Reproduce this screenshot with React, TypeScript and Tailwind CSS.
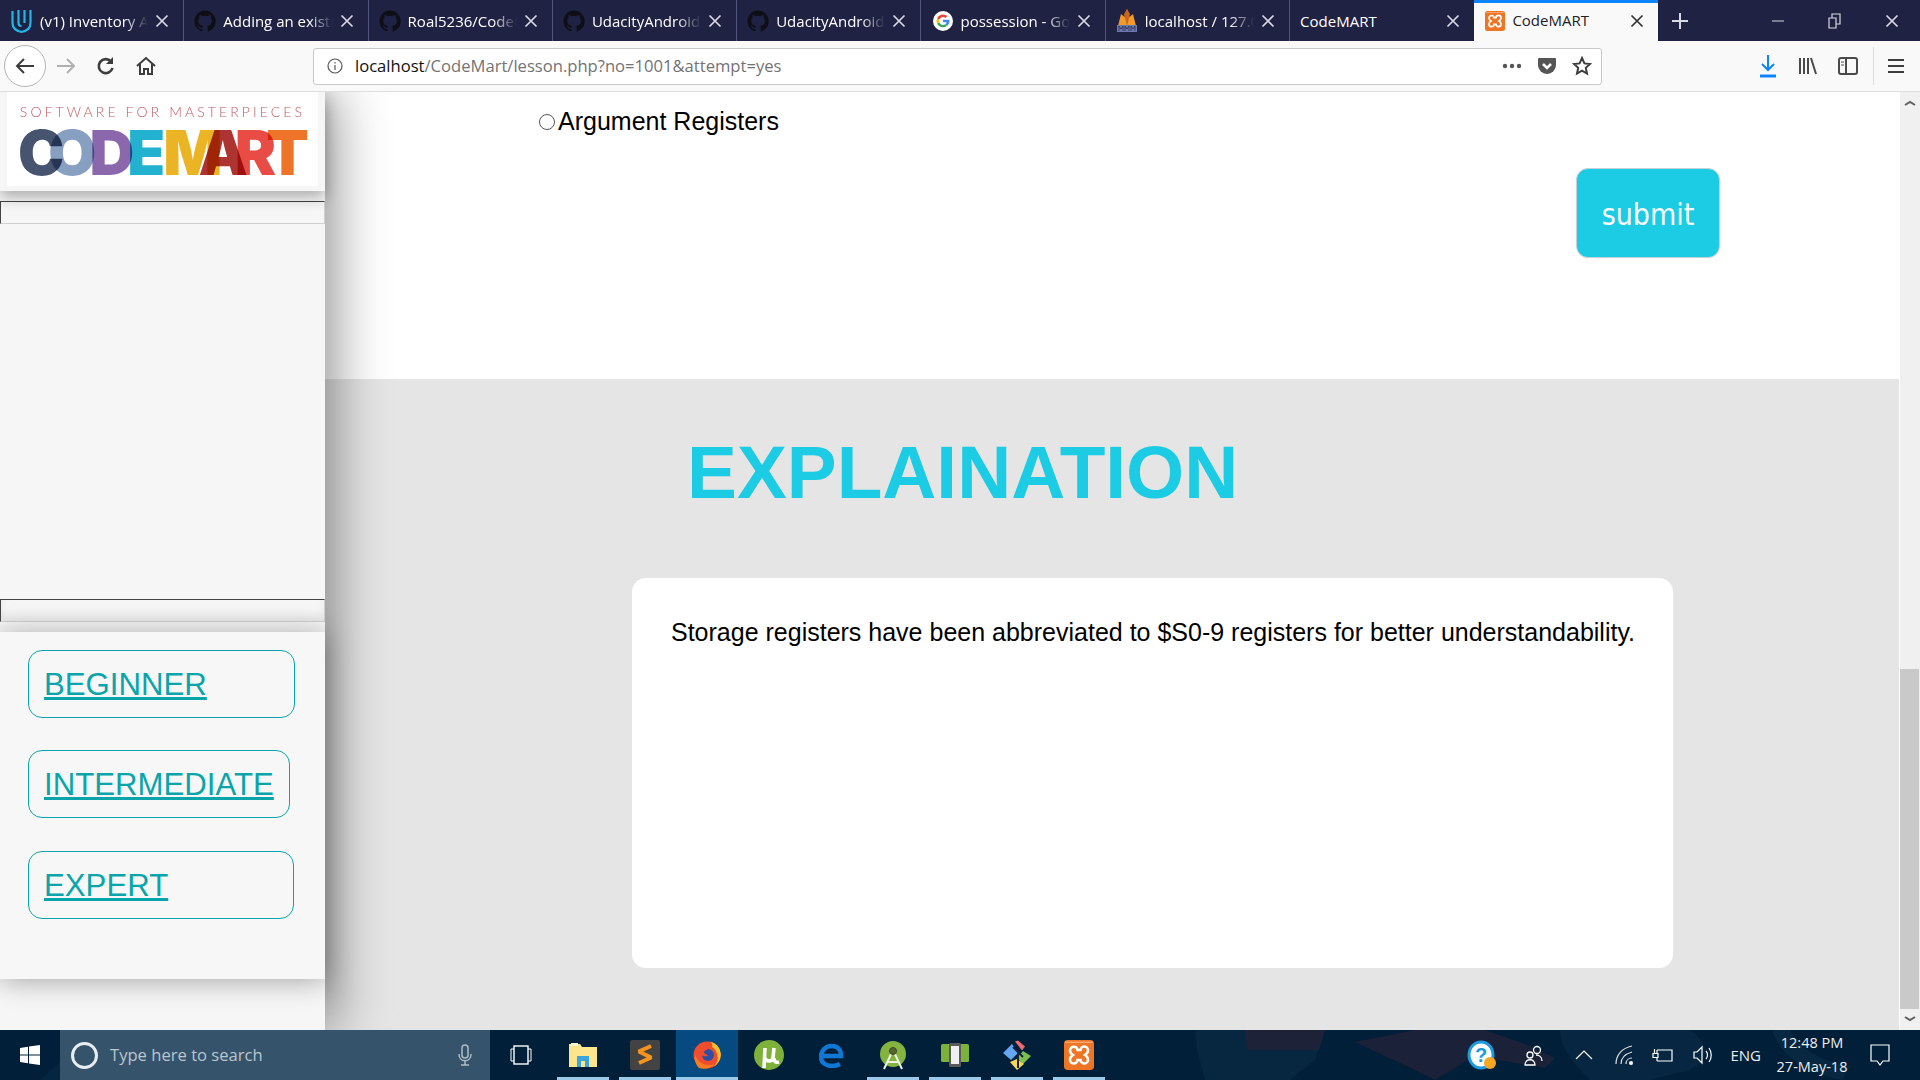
const Close = ({ dark }: { dark?: boolean }) => (
  <svg width="14" height="14" viewBox="0 0 14 14" className="shrink-0" fill="none" stroke={dark ? "#333" : "#d8d9e2"} strokeWidth="1.7">
    <path d="M1.5 1.5l11 11M12.5 1.5l-11 11" />
  </svg>
);

const GitHub = () => (
  <svg width="22" height="22" viewBox="0 0 24 24" className="shrink-0" fill="#0e0f16">
    <path d="M12 .5C5.6.5.5 5.7.5 12.2c0 5.1 3.3 9.5 7.9 11 .6.1.8-.3.8-.6v-2c-3.200.7-3.900-1.400-3.900-1.400-.5-1.300-1.300-1.700-1.300-1.700-1-.7.1-.7.1-.7 1.200.1 1.800 1.200 1.800 1.200 1 1.800 2.700 1.300 3.400 1 .1-.8.4-1.300.7-1.600-2.600-.3-5.300-1.300-5.300-5.700 0-1.300.4-2.300 1.200-3.100-.1-.3-.5-1.500.1-3.100 0 0 1-.3 3.200 1.200a11 11 0 0 1 5.800 0c2.200-1.500 3.200-1.200 3.200-1.200.6 1.600.2 2.800.1 3.100.7.8 1.200 1.800 1.200 3.100 0 4.500-2.700 5.400-5.300 5.700.4.400.8 1.100.8 2.200v3.200c0 .3.2.7.8.6 4.600-1.500 7.900-5.900 7.900-11C23.500 5.700 18.400.5 12 .5z" />
  </svg>
);

const Udacity = () => (
  <svg width="23" height="26" viewBox="0 0 22 26" className="shrink-0" fill="none" stroke="#1fb6e8" strokeWidth="2.2">
    <path d="M2 3v12c0 5 4 8 9 9 5-1 9-4 9-9V2M8 2v13c0 2 1 3 3 3M14 2v13" />
  </svg>
);

const Google = () => (
  <svg width="20" height="20" viewBox="0 0 20 20" className="ml-[2px] shrink-0">
    <circle cx="10" cy="10" r="10" fill="#fff" />
    <path d="M10 3.500a6.500 6.500 0 0 1 4.300 1.600l-1.800 1.800A4 4 0 0 0 6.200 8.700L4.200 7A6.500 6.500 0 0 1 10 3.500z" fill="#ea4335" />
    <path d="M4.200 7l2 1.700a4 4 0 0 0 0 2.600l-2 1.700a6.500 6.500 0 0 1 0-6z" fill="#fbbc05" />
    <path d="M4.200 13l2-1.700a4 4 0 0 0 6 2l1.900 1.500A6.500 6.500 0 0 1 4.200 13z" fill="#34a853" />
    <path d="M16.400 8.800H10v2.500h3.600a3 3 0 0 1-1.300 2l1.900 1.500a6.500 6.500 0 0 0 2.200-6z" fill="#4285f4" />
  </svg>
);

const Pma = () => (
  <svg width="22" height="24" viewBox="0 0 22 24" className="shrink-0">
    <path d="M11 0l2.500 8L17 5l3 12H2L5 5l3.500 3z" fill="#f09a2c" />
    <path d="M8 5l3-5 3 5-3 12z" fill="#c9651c" />
    <rect x="1" y="16" width="20" height="7" fill="#6c78af" />
    <path d="M3 22v-5l2 3 2-3v5M9 22v-5l2 3 2-3v5M15 22v-5l2 3 2-3v5" fill="none" stroke="#2a2f52" strokeWidth=".8" />
  </svg>
);

const Xampp = ({ size = 20 }: { size?: number }) => (
  <svg width={size} height={size} viewBox="0 0 20 20" className="shrink-0">
    <rect width="20" height="20" rx="2.500" fill="#ee7524" />
    <path d="M.8 1.500h18.400" stroke="#f8b183" strokeWidth=".8" />
    <path d="M6.500 4.500a2.500 2.500 0 0 0-2.500 2.500c0 1.300.8 2.200 2 3-1.200.8-2 1.700-2 3a2.500 2.500 0 0 0 5 .3h2a2.500 2.500 0 0 0 5-.3c0-1.300-.8-2.200-2-3 1.200-.8 2-1.700 2-3a2.500 2.500 0 0 0-5-.3H9A2.500 2.500 0 0 0 6.500 4.500z" fill="none" stroke="#fff" strokeWidth="1.700" />
  </svg>
);

function Tab({ icon, label, fade = true, last }: { icon?: React.ReactNode; label: string; fade?: boolean; last?: boolean }) {
  return (
    <div className={`flex h-full w-[184.300px] shrink-0 items-center gap-[7px] pl-[10px] pr-[14px] ${last ? "" : "border-r border-[#50547a]"}`}>
      {icon}
      <span className={`flex-1 overflow-hidden whitespace-nowrap pt-[1px] text-[15px] text-white ${fade ? "[mask-image:linear-gradient(to_right,#000_78%,transparent)]" : ""}`}>
        {label}
      </span>
      <Close />
    </div>
  );
}

function TabBar() {
  return (
    <div className="flex h-[41px] shrink-0 items-center bg-[#1f2243]">
      <Tab icon={<Udacity />} label="(v1) Inventory App" />
      <Tab icon={<GitHub />} label="Adding an existing" />
      <Tab icon={<GitHub />} label="Roal5236/CodeMart" />
      <Tab icon={<GitHub />} label="UdacityAndroid/And" />
      <Tab icon={<GitHub />} label="UdacityAndroid/And" />
      <Tab icon={<Google />} label="possession - Google" />
      <Tab icon={<Pma />} label="localhost / 127.0.0.1" />
      <Tab label="CodeMART" fade={false} last />
      <div className="flex h-full w-[184px] shrink-0 items-center gap-[7px] border-t-[3px] border-[#0a84ff] bg-[#f9f9fa] pl-[11px] pr-[14px] pb-[3px]">
        <Xampp />
        <span className="flex-1 text-[15px] text-[#222]">CodeMART</span>
        <Close dark />
      </div>
      <div className="flex w-[38px] justify-center pl-[5px]">
        <svg width="18" height="18" viewBox="0 0 18 18" stroke="#d8d9e2" strokeWidth="2"><path d="M9 1v16M1 9h16" /></svg>
      </div>
      <div className="ml-auto flex h-full items-center">
        <div className="flex w-[57px] justify-center">
          <svg width="12" height="12" viewBox="0 0 12 12" stroke="#d8d9e2"><path d="M0 6h12" /></svg>
        </div>
        <div className="flex w-[57px] justify-center">
          <svg width="13" height="16" viewBox="0 0 13 16" fill="none" stroke="#d8d9e2" strokeWidth="1.200"><path d="M1 5h7v10H1zM4 5V1h8v10H8" /></svg>
        </div>
        <div className="flex w-[57px] justify-center">
          <Close />
        </div>
      </div>
    </div>
  );
}

function Toolbar() {
  return (
    <div className="flex h-[51px] shrink-0 items-center border-b border-[#dedede] bg-[#f9f9fa]">
      <div className="ml-[4px] flex h-[42px] w-[42px] items-center justify-center rounded-full border border-[#b5b5b5] bg-white">
        <svg width="20" height="20" viewBox="0 0 20 20" fill="none" stroke="#3d3d3d" strokeWidth="2"><path d="M19 10H2M9 3l-7 7 7 7" /></svg>
      </div>
      <div className="ml-[10px] w-[20px]">
        <svg width="20" height="20" viewBox="0 0 20 20" fill="none" stroke="#b0b0b0" strokeWidth="2"><path d="M1 10h17M11 3l7 7-7 7" /></svg>
      </div>
      <div className="ml-[20px] w-[20px]">
        <svg width="20" height="20" viewBox="0 0 20 20" fill="none" stroke="#3d3d3d" strokeWidth="2.600"><path d="M16.500 12a7 7 0 1 1-1.500-6.500" /><path d="M17 1v7h-7z" fill="#3d3d3d" stroke="none" /></svg>
      </div>
      <div className="ml-[20px] w-[20px]">
        <svg width="20" height="20" viewBox="0 0 20 20" fill="none" stroke="#3d3d3d" strokeWidth="2"><path d="M1 10l9-8 9 8M4 8v10h4v-5h4v5h4V8" /></svg>
      </div>
      <div className="ml-[157px] flex h-[37px] w-[1289px] items-center rounded-[3px] border border-[#c8c8c8] bg-white pl-[13px] pr-[10px]">
        <svg width="16" height="16" viewBox="0 0 16 16" fill="none" stroke="#555" strokeWidth="1.200"><circle cx="8" cy="8" r="7" /><path d="M8 7v5M8 4v1.500" /></svg>
        <span className="ml-[12px] pt-[1px] font-['Open_Sans',sans-serif] text-[16.600px] text-[#737373]">
          <span className="text-[#111]">localhost</span>/CodeMart/lesson.php?no=1001&amp;attempt=yes
        </span>
        <div className="ml-auto flex items-center gap-[14px]">
          <svg width="20" height="6" viewBox="0 0 20 6" fill="#555"><circle cx="3" cy="3" r="2.200" /><circle cx="10" cy="3" r="2.200" /><circle cx="17" cy="3" r="2.200" /></svg>
          <svg width="20" height="20" viewBox="0 0 20 20" className="ml-[1px]"><path d="M2 2h16a1 1 0 0 1 1 1v6a9 9 0 0 1-18 0V3a1 1 0 0 1 1-1z" fill="#555" /><path d="M6 8l4 4 4-4" fill="none" stroke="#fff" strokeWidth="2.500" /></svg>
          <svg width="20" height="20" viewBox="0 0 20 20" fill="none" stroke="#3d3d3d" strokeWidth="2" className="-mr-[1px] ml-[1px]"><path d="M10 2l2.400 5.400 5.600.6-4.200 3.800 1.200 5.700L10 14.700 5 17.500l1.200-5.700L2 8l5.600-.6z" /></svg>
        </div>
      </div>
      <div className="ml-[156px] w-[20px]">
        <svg width="20" height="24" viewBox="0 0 20 24" fill="none" stroke="#0a84ff" strokeWidth="2"><path d="M10 1v15M4 10l6 6 6-6" /><path d="M2 22h16" strokeWidth="3" /></svg>
      </div>
      <div className="ml-[20px] w-[20px]">
        <svg width="20" height="20" viewBox="0 0 20 20" fill="none" stroke="#4a4a4a" strokeWidth="2"><path d="M2 2v16M6 2v16M10 2v16M13 2l5 16" /></svg>
      </div>
      <div className="ml-[20px] w-[20px]">
        <svg width="20" height="20" viewBox="0 0 20 20" fill="none" stroke="#4a4a4a" strokeWidth="2"><rect x="1" y="2" width="18" height="16" rx="2" /><path d="M8 2v16" /><path d="M3 6h3M3 9h3" strokeWidth="1" /></svg>
      </div>
      <div className="ml-[15px] h-[38px] w-px bg-[#dedede]" />
      <div className="ml-[14px] w-[16px]">
        <svg width="16" height="16" viewBox="0 0 16 16" stroke="#3d3d3d" strokeWidth="2"><path d="M0 2h16M0 8h16M0 14h16" /></svg>
      </div>
    </div>
  );
}

const logoLetters: [string, string, string][] = [
  ["C", "#46546f", "ml-0"],
  ["O", "#87a0c2", "-ml-[16px]"],
  ["D", "#8a68ab", "-ml-[7px]"],
  ["E", "#22b1cf", "-ml-[7px]"],
  ["M", "#ebb425", "-ml-[2px]"],
  ["A", "#ad3430", "-ml-[24px]"],
  ["R", "#e94c44", "-ml-[13px]"],
  ["T", "#ee742a", "-ml-[10px]"],
];

function Logo() {
  return (
    <div className="relative z-10 flex h-[99px] w-[325px] flex-col items-center shadow-[0_6px_14px_rgba(0,0,0,0.3)]">
      <div className="flex h-[94px] w-[311px] flex-col items-center bg-white pt-[11px]">
        <div className="font-['Lato',sans-serif] text-[14px] font-light leading-[18px] tracking-[3.100px] text-[#bd5a62]">SOFTWARE FOR MASTERPIECES</div>
        <div className="mt-[9px] flex h-[46px] w-full items-center pl-[11px] font-['Inter',sans-serif] text-[62px] font-black leading-[46px]">
          {logoLetters.map(([ch, color, ml]) => (
            <span key={ch} className={`${ml} mix-blend-multiply`} style={{ color }}>{ch}</span>
          ))}
        </div>
      </div>
    </div>
  );
}

function LevelLink({ label, width, className }: { label: string; width: string; className?: string }) {
  return (
    <div className={`flex h-[68px] items-center rounded-[14px] border border-[#0aa5ab] pl-[15px] pt-[1px] ${width} ${className ?? ""}`}>
      <a href="#" className="text-[31.200px] leading-none text-[#0aa5ab] underline">{label}</a>
    </div>
  );
}

function Sidebar() {
  return (
    <aside className="relative z-20 flex w-[325px] shrink-0 flex-col bg-[#f6f6f6] shadow-[10px_0_50px_rgba(0,0,0,0.42)]">
      <Logo />
      <div className="mt-[10px] h-[23px] w-[325px] border-t border-l border-b border-r border-t-[#444] border-l-[#444] border-r-[#d0d0d0] border-b-[#d0d0d0]" />
      <div className="mt-[375px] h-[23px] w-[325px] border-t border-l border-b border-r border-t-[#444] border-l-[#444] border-r-[#d0d0d0] border-b-[#d0d0d0] shadow-[inset_0_-6px_8px_rgba(0,0,0,0.06)]" />
      <div className="relative mt-[10px] flex h-[347px] flex-col bg-[#f7f7f7] pt-[18px] pl-[28px] shadow-[0_2px_26px_rgba(0,0,0,0.33)]">
        <LevelLink label="BEGINNER" width="w-[267px]" />
        <LevelLink label="INTERMEDIATE" width="w-[262px]" className="mt-[32px]" />
        <LevelLink label="EXPERT" width="w-[266px]" className="mt-[33px]" />
      </div>
    </aside>
  );
}

function Main() {
  return (
    <main className="flex flex-1 flex-col overflow-hidden">
      <section className="relative h-[287px] shrink-0 bg-white">
        <label className="ml-[214px] mt-[14px] flex items-center text-[25px] leading-[32px] text-black">
          <span className="h-[16px] w-[16px] rounded-full border border-[#555] bg-white" />
          <span className="ml-[3px] -mt-[1px]">Argument Registers</span>
        </label>
        <div className="mt-[31px] ml-[1251px] flex h-[90px] w-[144px] items-center justify-center rounded-[12px] border border-[#c3d3d7] bg-[#1ccbe4] pt-[3px] font-['DejaVu_Sans_Condensed','DejaVu_Sans',sans-serif] text-[30px] text-white">
          submit
        </div>
      </section>
      <section className="flex-1 bg-[#e5e5e5]">
        <h1 className="ml-[362px] mt-[50px] text-[74.800px] font-bold leading-[86px] text-[#1ccbe4]">EXPLAINATION</h1>
        <div className="ml-[307px] mt-[63px] h-[390px] w-[1041px] whitespace-nowrap rounded-[14px] bg-white pl-[39px] pt-[38px] text-[25px] leading-[32px] text-black">
          Storage registers have been abbreviated to $S0-9 registers for better understandability.
        </div>
      </section>
    </main>
  );
}

function Scrollbar() {
  return (
    <div className="flex w-[21px] shrink-0 flex-col border-l border-white bg-[#f0f0f0]">
      <svg width="20" height="8" viewBox="0 0 20 8" fill="none" stroke="#606060" strokeWidth="2" className="mt-[7px]"><path d="M5 6l5-3 5 3" /></svg>
      <div className="mt-[562px] h-[340px] w-[19px] bg-[#c9c9c9]" />
      <svg width="20" height="8" viewBox="0 0 20 8" fill="none" stroke="#606060" strokeWidth="2" className="mt-[6px]"><path d="M5 2l5 3 5-3" /></svg>
    </div>
  );
}

function TaskIcon({ children, open, active }: { children: React.ReactNode; open?: boolean; active?: boolean }) {
  return (
    <div className={`relative flex h-full w-[62px] items-center justify-center ${active ? "bg-[#054a80]" : ""}`}>
      {children}
      {open && <div className={`absolute bottom-0 h-[3px] bg-[#9cc8ea] ${active ? "inset-x-0" : "inset-x-[5px]"}`} />}
    </div>
  );
}

function Wallpaper() {
  return (
    <svg className="absolute inset-0" width="1920" height="50" viewBox="0 0 1920 50">
      <path d="M40 50L95 0h10L60 50z" fill="#06263f" />
      <path d="M1195 0h130l-10 30-25 20h-85l-8-30z" fill="#072740" />
      <path d="M1245 0h80l-6 20h-72z" fill="#1e2239" />
      <path d="M1355 12l60-12h70l40 14 30 14-10 10-70-12-40 24-20-10z" fill="#1b2138" />
      <path d="M1560 0h130c20 14 20 30 0 40l-40 10h-60c-20-20-30-34-30-50z" fill="#062641" />
      <path d="M1790 0c10 20 30 30 60 36l-8 14c-30-6-60-20-70-50z" fill="#072840" />
    </svg>
  );
}

function Taskbar() {
  return (
    <div className="relative flex h-[50px] shrink-0 items-center bg-[#011f38] text-white">
      <Wallpaper />
      <div className="relative flex h-full w-[60px] items-center justify-center">
        <svg width="20" height="20" viewBox="0 0 20 20" fill="#fff"><path d="M0 3l8-1.200v7.700H0zM9 1.600L20 0v9.500H9zM0 10.500h8v7.700L0 17zM9 10.500h11V20L9 18.400z" /></svg>
      </div>
      <div className="relative flex h-full w-[430px] items-center bg-[#35536a] pl-[11px] pr-[17px]">
        <span className="h-[27px] w-[27px] rounded-full border-[3px] border-[#e8edf1]" />
        <span className="ml-[12px] font-['Open_Sans',sans-serif] text-[16.600px] text-[#b9c6d0]">Type here to search</span>
        <svg className="ml-auto" width="16" height="22" viewBox="0 0 16 22" fill="none" stroke="#aebcc7" strokeWidth="1.500"><rect x="5" y="1" width="6" height="13" rx="3" /><path d="M2 10c0 9 12 9 12 0M8 17v4M4 21h8" /></svg>
      </div>
      <div className="relative flex h-full items-center">
        <TaskIcon>
          <svg width="24" height="24" viewBox="0 0 24 24" fill="none" stroke="#fff" strokeWidth="1.400"><rect x="5" y="3" width="14" height="18" /><path d="M5 6H2v12h3M19 6h3v12h-3" strokeWidth="1" /></svg>
        </TaskIcon>
        <TaskIcon open>
          <svg width="28" height="24" viewBox="0 0 28 24"><path d="M0 1h11l2 3h15v20H0z" fill="#fde58e" /><path d="M2 0h7v3H2z" fill="#fff6cf" /><path d="M8 24V13h12v11h-4v-6h-4v6z" fill="#3aa5dc" /></svg>
        </TaskIcon>
        <TaskIcon open>
          <div className="flex h-[30px] w-[30px] items-center justify-center rounded-[2px] bg-[#434343]">
            <svg width="16" height="22" viewBox="0 0 16 22" fill="none" stroke="#f6921e" strokeWidth="4"><path d="M14 2L3 7v1l10 5v1L2 19" /></svg>
          </div>
        </TaskIcon>
        <TaskIcon open active>
          <svg width="28" height="28" viewBox="0 0 28 28"><circle cx="14" cy="14" r="13.500" fill="#ef4d2d" /><path d="M17 .5A13.500 13.500 0 0 1 20 26c4-3 6-8 4-13-.5-3-3-6-5-7 1-2 0-4-2-5.500z" fill="#fbc02d" /><path d="M6 27c-3-3-5-8-4-13 2 4 5 9 12 10 3 .5 6 0 8-1-4 4-11 6-16 4z" fill="#f57d20" /><circle cx="15" cy="14" r="6" fill="#2c4ea3" /><path d="M6 10l5-6c2 1 4 3 3 5-2 0-3 1-3 3 1 1 3 1 4 3-3 1-7 0-9-5z" fill="#ef4d2d" /></svg>
        </TaskIcon>
        <TaskIcon>
          <svg width="30" height="30" viewBox="0 0 30 30"><circle cx="15" cy="15" r="15" fill="#7fb13a" /><path d="M3 20a15 15 0 0 1 8-17 15 15 0 0 0-8 17z" fill="#b7d880" /><path d="M11 8l-1 20M11 18c1 4 7 4 8 0l1-10M20 18c0 3 1 5 5 4" fill="none" stroke="#fff" strokeWidth="3.600" /></svg>
        </TaskIcon>
        <TaskIcon>
          <svg width="25" height="25" viewBox="0 0 25 25" fill="none" stroke="#0f78d4" strokeWidth="4.500"><path d="M3 13h19c0-6-3-10-9-10-6 0-11 4-11 11 0 5 4 9 11 9 3 0 6-1 8-2" /></svg>
        </TaskIcon>
        <TaskIcon open>
          <svg width="26" height="29" viewBox="0 0 26 29"><circle cx="13" cy="13" r="13" fill="#84b33f" /><path d="M13 9L4 28M13 9l9 19M7 21h12" stroke="#eef0e6" strokeWidth="2" fill="none" /><circle cx="13" cy="10" r="3.500" fill="#56652f" stroke="#3c4a2a" /></svg>
        </TaskIcon>
        <TaskIcon open>
          <svg width="28" height="24" viewBox="0 0 28 24"><rect y="1" width="28" height="18" rx="1.500" fill="#7cb13c" /><rect x="8" y="0" width="12" height="24" rx="1.500" fill="#5a5a5a" /><rect x="10" y="3" width="8" height="18" fill="#efefef" /></svg>
        </TaskIcon>
        <TaskIcon open>
          <svg width="30" height="30" viewBox="0 0 30 30"><path d="M13 1.500l3-1 7 6-3 4z" fill="#ef6b73" /><path d="M10 4L1 13l8 7 7-7z" fill="#64a6f0" /><path d="M21 11l-6 7 6 6 8-8z" fill="#7cc04f" /><path d="M8 22l7-3 7 5-7 6z" fill="#f7d65a" /><path d="M11 7l5 5v9M16 12l5 5M16 21v7" stroke="#14243a" strokeWidth="2" fill="none" /></svg>
        </TaskIcon>
        <TaskIcon open>
          <Xampp size={30} />
        </TaskIcon>
      </div>
      <div className="relative ml-auto flex h-full items-center">
        <svg width="30" height="30" viewBox="0 0 30 30" className="mr-[27px]"><ellipse cx="14" cy="15" rx="12" ry="13" fill="#fff" stroke="#1b9ae0" strokeWidth="3" /><text x="14" y="22" textAnchor="middle" fontSize="20" fontWeight="700" fill="#1b9ae0" fontFamily="Liberation Sans">?</text><circle cx="23" cy="23" r="6" fill="#f5a623" /></svg>
        <svg width="20" height="22" viewBox="0 0 20 22" fill="none" stroke="#fff" strokeWidth="1.300" className="mr-[31px]"><circle cx="13" cy="6" r="3.500" /><circle cx="6" cy="11" r="3" /><path d="M1 21c0-7 10-7 10 0zM12 11c3 0 6 2 6 6" /></svg>
        <svg width="18" height="10" viewBox="0 0 18 10" fill="none" stroke="#fff" strokeWidth="1.200" className="mr-[22px]"><path d="M1 9l8-8 8 8" /></svg>
        <svg width="18" height="20" viewBox="0 0 18 20" fill="none" stroke="#ddd" strokeWidth="1.200" className="mr-[19px]"><path d="M1 19C1 10 7 3 17 1M6 19c0-6 4-10 11-12M11 19c0-3 2-6 6-6" /><circle cx="16" cy="18" r="1.500" fill="#fff" /></svg>
        <svg width="22" height="20" viewBox="0 0 22 20" fill="none" stroke="#fff" strokeWidth="1.200" className="mr-[19px]"><path d="M5 5h15v11H5M5 5v3M5 13v3" /><path d="M1 8.500h5v4H1zM2.500 4v4" /></svg>
        <svg width="22" height="22" viewBox="0 0 22 22" fill="none" stroke="#fff" strokeWidth="1.200" className="mr-[15px]"><path d="M1 8h3l5-5v16l-5-5H1zM13 7c2 2 2 6 0 8M16 4c3 4 3 10 0 14" /></svg>
        <span className="mr-[15px] font-['Open_Sans',sans-serif] text-[15px] text-[#eee]">ENG</span>
        <div className="mr-[22px] flex w-[72px] flex-col items-center font-['Open_Sans',sans-serif] text-[14.500px] leading-[24px] text-[#eee]">
          <span>12:48 PM</span>
          <span>27-May-18</span>
        </div>
        <svg width="20" height="22" viewBox="0 0 20 22" fill="none" stroke="#fff" strokeWidth="1.200" className="mr-[30px]"><path d="M1 1h18v16h-6l-3 4-3-4H1z" /></svg>
      </div>
    </div>
  );
}

export default function App() {
  return (
    <div className="flex h-screen w-screen flex-col overflow-hidden font-['Liberation_Sans',Arial,sans-serif]">
      <div className="font-['Open_Sans',sans-serif]">
        <TabBar />
        <Toolbar />
      </div>
      <div className="flex min-h-0 flex-1 overflow-hidden">
        <Sidebar />
        <Main />
        <Scrollbar />
      </div>
      <Taskbar />
    </div>
  );
}
